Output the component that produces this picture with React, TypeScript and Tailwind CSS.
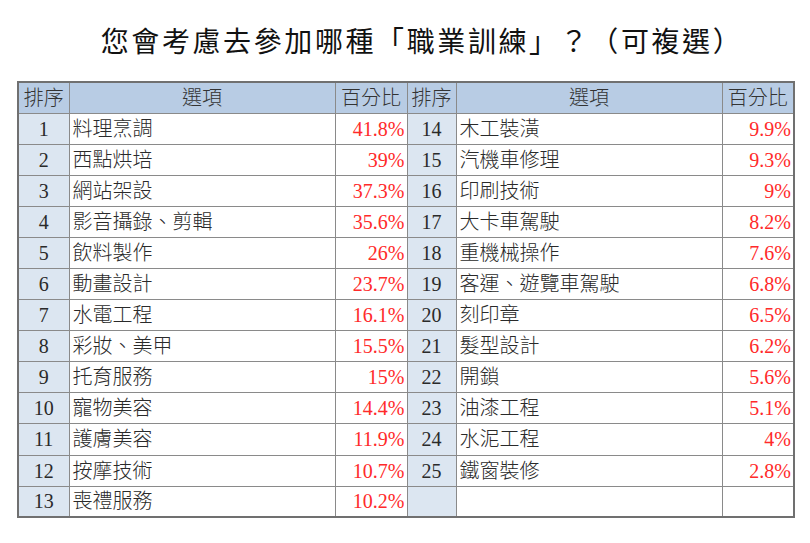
import React from "react";

const left: [string, string, string][] = [
  ["1", "料理烹調", "41.8%"],
  ["2", "西點烘培", "39%"],
  ["3", "網站架設", "37.3%"],
  ["4", "影音攝錄、剪輯", "35.6%"],
  ["5", "飲料製作", "26%"],
  ["6", "動畫設計", "23.7%"],
  ["7", "水電工程", "16.1%"],
  ["8", "彩妝、美甲", "15.5%"],
  ["9", "托育服務", "15%"],
  ["10", "寵物美容", "14.4%"],
  ["11", "護膚美容", "11.9%"],
  ["12", "按摩技術", "10.7%"],
  ["13", "喪禮服務", "10.2%"],
];

const right: [string, string, string][] = [
  ["14", "木工裝潢", "9.9%"],
  ["15", "汽機車修理", "9.3%"],
  ["16", "印刷技術", "9%"],
  ["17", "大卡車駕駛", "8.2%"],
  ["18", "重機械操作", "7.6%"],
  ["19", "客運、遊覽車駕駛", "6.8%"],
  ["20", "刻印章", "6.5%"],
  ["21", "髮型設計", "6.2%"],
  ["22", "開鎖", "5.6%"],
  ["23", "油漆工程", "5.1%"],
  ["24", "水泥工程", "4%"],
  ["25", "鐵窗裝修", "2.8%"],
  ["", "", ""],
];

const cell = "border border-[#8a8a8a] p-0 leading-none";

export default function App() {
  return (
    <div
      className="w-[810px] h-[543px] bg-white text-[#2a2a2a]"
      style={{ fontFamily: '"Liberation Serif", "Noto Sans CJK TC", serif' }}
    >
      <div className="flex justify-center pl-[34px] pt-[26px] h-[81px]">
        <h1 className="text-[28px] leading-[34px] font-normal tracking-[2.6px] text-[#111]">
          您會考慮去參加哪種「職業訓練」？（可複選）
        </h1>
      </div>
      <table className="ml-[17px] border-collapse border-2 border-[#707070] table-fixed w-[776px] text-[20px] font-light">
        <colgroup>
          <col className="w-[51px]" />
          <col className="w-[266px]" />
          <col className="w-[72px]" />
          <col className="w-[49px]" />
          <col className="w-[266px]" />
          <col className="w-[72px]" />
        </colgroup>
        <thead>
          <tr className="h-[31px] bg-[#b8cce4] text-[#333]">
            <th className={`${cell} font-light text-center`}>排序</th>
            <th className={`${cell} font-light text-center`}>選項</th>
            <th className={`${cell} font-light text-center`}>百分比</th>
            <th className={`${cell} font-light text-center`}>排序</th>
            <th className={`${cell} font-light text-center`}>選項</th>
            <th className={`${cell} font-light text-center`}>百分比</th>
          </tr>
        </thead>
        <tbody>
          {left.map((l, i) => {
            const r = right[i];
            return (
              <tr key={i} className="h-[31.1px]">
                <td className={`${cell} bg-[#dce6f1] text-center`}>{l[0]}</td>
                <td className={`${cell} pl-[3px] text-left`}>{l[1]}</td>
                <td className={`${cell} pr-[2px] text-right text-[#ff2a2a]`}>{l[2]}</td>
                <td className={`${cell} bg-[#dce6f1] text-center`}>{r[0]}</td>
                <td className={`${cell} pl-[3px] text-left`}>{r[1]}</td>
                <td className={`${cell} pr-[2px] text-right text-[#ff2a2a]`}>{r[2]}</td>
              </tr>
            );
          })}
        </tbody>
      </table>
    </div>
  );
}
